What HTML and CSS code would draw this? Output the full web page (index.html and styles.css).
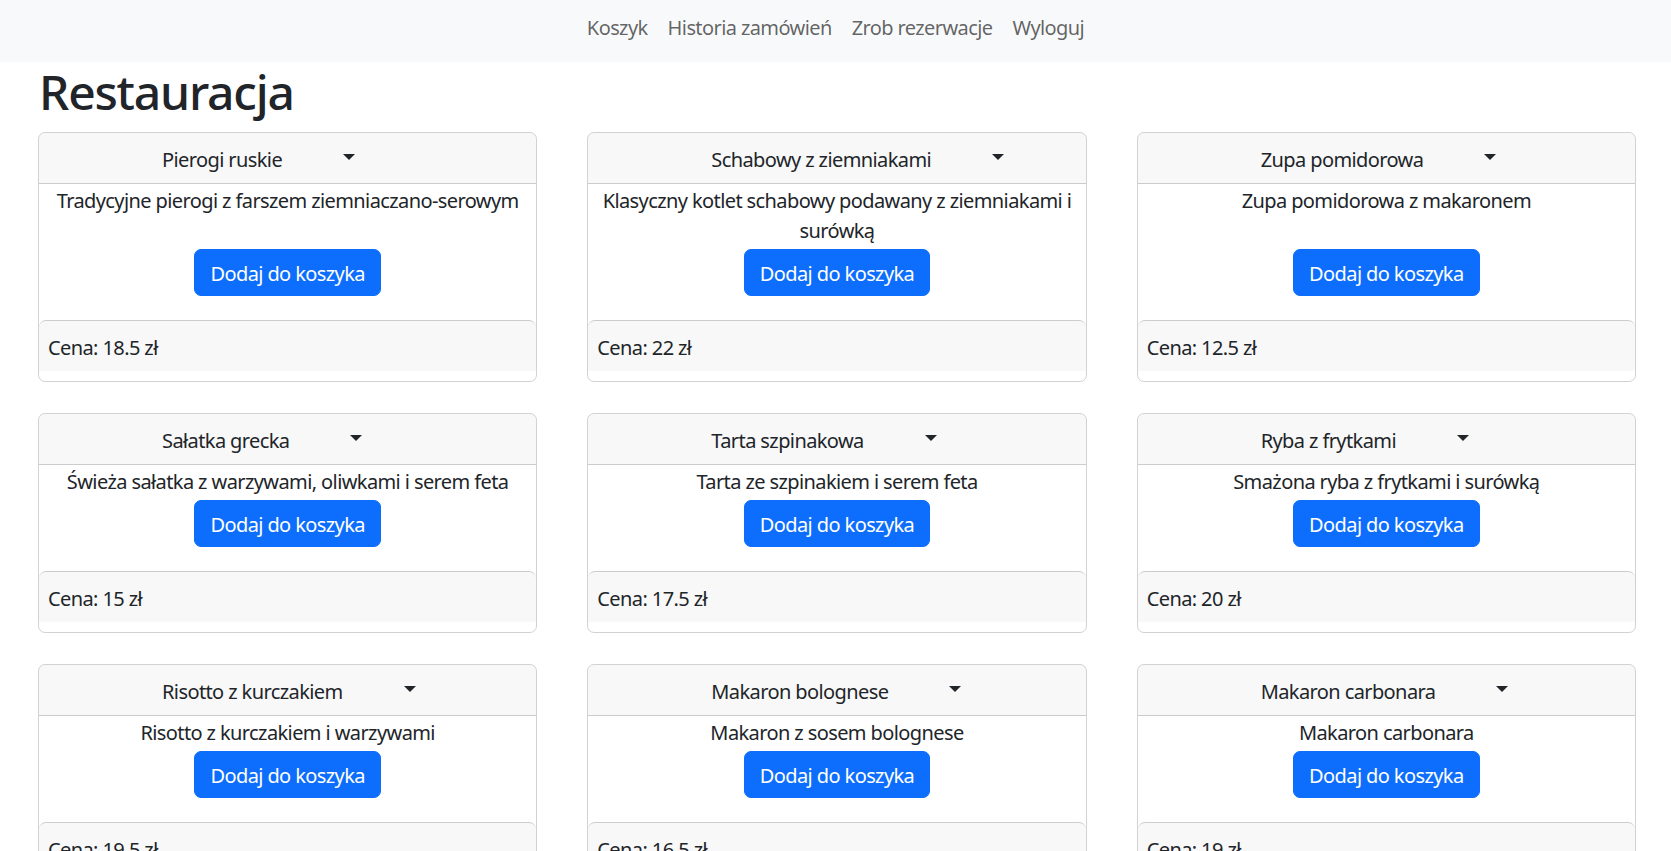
FILE: index.html
```html
<!DOCTYPE html>
<html lang="pl">
<head>
<meta charset="utf-8">
<title>Restauracja</title>
<link rel="stylesheet" href="styles.css">
</head>
<body>
<nav class="navbar">
  <a class="nav-link" href="#">Koszyk</a>
  <a class="nav-link" href="#">Historia zamówień</a>
  <a class="nav-link" href="#">Zrob rezerwacje</a>
  <a class="nav-link" href="#">Wyloguj</a>
</nav>
<main class="container">
  <h1 class="title">Restauracja</h1>
  <div class="grid">
    <div class="card">
      <div class="card-header"><span class="dish">Pierogi ruskie</span><span class="caret"></span></div>
      <div class="card-body"><p class="desc">Tradycyjne pierogi z farszem ziemniaczano-serowym</p><button class="btn">Dodaj do koszyka</button></div>
      <div class="card-footer">Cena: 18.5 zł</div>
    </div>
    <div class="card">
      <div class="card-header"><span class="dish">Schabowy z ziemniakami</span><span class="caret"></span></div>
      <div class="card-body"><p class="desc">Klasyczny kotlet schabowy podawany z ziemniakami i surówką</p><button class="btn">Dodaj do koszyka</button></div>
      <div class="card-footer">Cena: 22 zł</div>
    </div>
    <div class="card">
      <div class="card-header"><span class="dish">Zupa pomidorowa</span><span class="caret"></span></div>
      <div class="card-body"><p class="desc">Zupa pomidorowa z makaronem</p><button class="btn">Dodaj do koszyka</button></div>
      <div class="card-footer">Cena: 12.5 zł</div>
    </div>
    <div class="card">
      <div class="card-header"><span class="dish">Sałatka grecka</span><span class="caret"></span></div>
      <div class="card-body"><p class="desc">Świeża sałatka z warzywami, oliwkami i serem feta</p><button class="btn">Dodaj do koszyka</button></div>
      <div class="card-footer">Cena: 15 zł</div>
    </div>
    <div class="card">
      <div class="card-header"><span class="dish">Tarta szpinakowa</span><span class="caret"></span></div>
      <div class="card-body"><p class="desc">Tarta ze szpinakiem i serem feta</p><button class="btn">Dodaj do koszyka</button></div>
      <div class="card-footer">Cena: 17.5 zł</div>
    </div>
    <div class="card">
      <div class="card-header"><span class="dish">Ryba z frytkami</span><span class="caret"></span></div>
      <div class="card-body"><p class="desc">Smażona ryba z frytkami i surówką</p><button class="btn">Dodaj do koszyka</button></div>
      <div class="card-footer">Cena: 20 zł</div>
    </div>
    <div class="card">
      <div class="card-header"><span class="dish">Risotto z kurczakiem</span><span class="caret"></span></div>
      <div class="card-body"><p class="desc">Risotto z kurczakiem i warzywami</p><button class="btn">Dodaj do koszyka</button></div>
      <div class="card-footer">Cena: 19.5 zł</div>
    </div>
    <div class="card">
      <div class="card-header"><span class="dish">Makaron bolognese</span><span class="caret"></span></div>
      <div class="card-body"><p class="desc">Makaron z sosem bolognese</p><button class="btn">Dodaj do koszyka</button></div>
      <div class="card-footer">Cena: 16.5 zł</div>
    </div>
    <div class="card">
      <div class="card-header"><span class="dish">Makaron carbonara</span><span class="caret"></span></div>
      <div class="card-body"><p class="desc">Makaron carbonara</p><button class="btn">Dodaj do koszyka</button></div>
      <div class="card-footer">Cena: 19 zł</div>
    </div>
  </div>
</main>
</body>
</html>
```
FILE: styles.css
```css
html {
  scrollbar-width: none;
}
* {
  box-sizing: border-box;
}
body {
  margin: 0;
  font-family: "Noto Sans", "Open Sans", sans-serif;
  font-size: 20px;
  line-height: 30px;
  letter-spacing: -0.6px;
  color: #212529;
  background: #fff;
}
.navbar {
  display: flex;
  justify-content: center;
  background: #f8f9fa;
  height: 62px;
  padding-top: 13px;
}
.nav-link {
  padding: 0 10px;
  color: rgba(0, 0, 0, 0.62);
  text-decoration: none;
}
.container {
  padding: 0 35px 0 38px;
}
.title {
  margin: 0 0 10px 0;
  font-size: 48px;
  line-height: 60px;
  font-weight: 500;
  letter-spacing: -1.2px;
  padding-left: 1px;
}
.grid {
  display: grid;
  grid-template-columns: repeat(3, 1fr);
  column-gap: 50px;
  row-gap: 31px;
}
.card {
  display: flex;
  flex-direction: column;
  border: 1px solid rgba(0, 0, 0, 0.175);
  border-radius: 7px;
  overflow: hidden;
  padding-bottom: 10px;
}
.card-header {
  display: flex;
  align-items: center;
  padding: 12px 20px 8px 123px;
  background: rgba(33, 37, 41, 0.03);
  border-bottom: 1px solid rgba(0, 0, 0, 0.175);
}
.caret {
  margin-left: 61px;
  width: 0;
  height: 0;
  border-top: 6px solid #212529;
  border-left: 6px solid transparent;
  border-right: 6px solid transparent;
  margin-top: -6px;
}
.card-body {
  flex: 1;
  display: flex;
  flex-direction: column;
  align-items: center;
  padding: 2px 10px 24px;
  text-align: center;
}
.desc {
  margin: 0 0 3px 0;
}
.btn {
  margin-top: auto;
  font-family: inherit;
  font-size: 20px;
  line-height: 30px;
  letter-spacing: -0.6px;
  color: #fff;
  background: #0d6efd;
  border: 1px solid #0d6efd;
  border-radius: 7px;
  padding: 8.5px 15px 6.5px;
  cursor: pointer;
}
.card-footer {
  padding: 12px 9px 8px;
  background: rgba(33, 37, 41, 0.03);
  border-top: 1px solid rgba(0, 0, 0, 0.175);
  border-radius: 7px 7px 0 0;
}
```
